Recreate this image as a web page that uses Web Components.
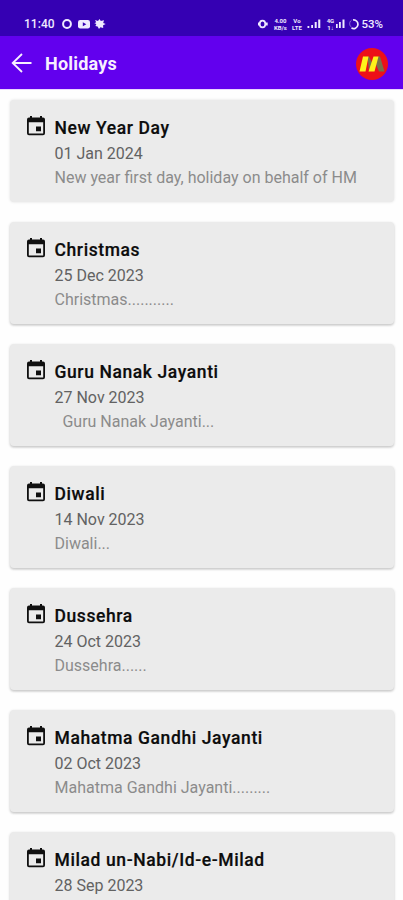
<!DOCTYPE html>
<html lang="en">
<head>
<meta charset="utf-8">
<title>Holidays</title>
<style>
html,body{margin:0;background:#fefefe}
body{width:403px;height:900px;overflow:hidden;font-family:Roboto,"Liberation Sans",sans-serif}
</style>
</head>
<body>
<holiday-screen></holiday-screen>
<script>
const define = (name, html) => customElements.define(name, class extends HTMLElement {
  constructor() {
    super();
    this.attachShadow({ mode: 'open' }).innerHTML = html;
  }
});

define('status-bar', `
<style>
:host{display:flex;box-sizing:border-box;height:36px;padding:12px 20px 0 24px;background:#3500b3;color:#efeaff;align-items:center;justify-content:space-between;font-size:12px;line-height:24px}
div{display:flex;align-items:center;height:24px}
svg{display:block;fill:currentColor}
.time{width:31px;letter-spacing:.05px;margin-right:7px;font-weight:500}
.stack{display:grid;font-size:6px;line-height:7px;font-weight:700;text-align:center}
.pct{font-size:11.5px;font-weight:500;letter-spacing:0}
</style>
<div><span class="time">11:40</span>
<svg width="44" height="12" viewBox="0 0 44 12"><ellipse cx="5" cy="6" rx="3.9" ry="4" fill="none" stroke="currentColor" stroke-width="2"/><rect x="16" y="2" width="12" height="8.5" rx="2.2"/><path d="M20.8 4.2v4l3.5-2z" fill="#3500b3"/><path d="M33 2l3 1 1.5-2 1.3 2L42 2.3l-.8 2.7 2.5 1.1-2.6 1.2.1 2.7-2.8-.8L37 11l-1.4-2.4-2.2-.5 1-2-2-.9 1.8-1z"/></svg></div>
<div>
<svg width="12" height="12" viewBox="0 0 12 12" style="margin-right:2px"><ellipse cx="4.5" cy="6" rx="2.8" ry="3.4" fill="none" stroke="currentColor" stroke-width="1.7"/><path d="M-.5 4.5h1.5v3H-.5zM8 4.5h1.7v3H8z"/></svg>
<span class="stack" style="width:16px"><span>4.00</span><span>KB/s</span></span>
<span class="stack" style="width:13px;margin-left:2px"><span>Vo</span><span>LTE</span></span>
<svg width="20" height="12" viewBox="0 0 20 12"><path d="M4.5 8h1.8v2H4.5zm3.7-1H10v3H8.200zM11.700 4h2v6h-2zm3.500-2.500h2.100V10h-2.100z"/></svg>
<span class="stack" style="width:12px;margin-left:1px"><span>4G</span><span>1↓</span></span>
<svg width="25" height="12" viewBox="0 0 25 12"><path d="M0 6h1.700v4H0zm3-2h1.800v6H3zm3.500-2.500h2V10h-2z"/><path d="M17 2a4.300 4.300 0 1 1-1.500 8" fill="none" stroke="currentColor" stroke-width="1.700"/><path d="M15.500 2.200c-2.400 1.500-2.400 5.500 0 7" fill="none" stroke="currentColor" opacity=".45"/></svg>
<span class="pct">53%</span></div>`);

define('app-bar', `
<style>
:host{display:flex;box-sizing:border-box;height:53px;padding:2px 14px 0 10px;align-items:center;background:#6200ee;color:#f7efff;box-shadow:0 1px 0 #e9d6ff}
h1{margin:0 auto 0 11px;font-size:18px;line-height:24px;font-weight:700;letter-spacing:.2px}
svg{display:block}
</style>
<svg width="24" height="24" viewBox="0 0 24 24" fill="none" stroke="currentColor" stroke-width="1.8"><path d="M21.5 11H3M12 2 2.7 11l9.3 9"/></svg>
<h1><slot></slot></h1>
<svg width="34" height="34" viewBox="355 48 34 34"><circle cx="372" cy="65" r="16" fill="#ed1018"/><path d="M367.500 57.500h1.500l4 8-3 7h-1zM378 57.500h2l4.500 15h-5.500l-3-7z" fill="#77724a"/><path d="M363 57.500h5.500l-3 15h-6zM373.500 57.500h5l-4 15h-6z" fill="#fff21a"/></svg>`);

define('event-icon', `
<style>:host{display:block;width:18px;height:20px}svg{display:block}</style>
<svg width="18" height="20" viewBox="0 0 18 20"><path fill="#101010" fill-rule="evenodd" d="M3 0h2v1.500h8V0h2v1.500h1a2 2 0 0 1 2 2v13.700a2 2 0 0 1-2 2H2a2 2 0 0 1-2-2V3.500a2 2 0 0 1 2-2h1zM1.800 6.200v11.200h14.400V6.200zm7.200 4.300h5v4.800H9z"/></svg>`);

define('holiday-card', `
<style>
:host{display:grid;box-sizing:border-box;height:102px;grid-template-columns:18px 1fr;column-gap:9.5px;padding:15.5px 16px 0 17px;border-radius:4px;background:#ebebeb;box-shadow:0 1px 3px rgba(0,0,0,.2),0 2px 2px rgba(0,0,0,.06)}
:host(:first-child){box-shadow:0 0 3px rgba(0,0,0,.13)}
div{min-width:0;white-space:pre}
h2,p{margin:0}
h2{font-size:17.5px;line-height:25px;font-weight:500;color:#0c0c0c;letter-spacing:.6px;-webkit-text-stroke:.2px #0c0c0c}
p{font-size:16px;line-height:24px}
.date{margin-top:1.5px;color:#626262}
.note{color:#8b8b8b}
</style>
<event-icon></event-icon>
<div><h2><slot name="title"></slot></h2><p class="date"><slot name="date"></slot></p><p class="note"><slot></slot></p></div>`);

define('holiday-screen', `
<style>
:host{display:flex;flex-direction:column;width:403px;height:900px;overflow:hidden}
status-bar,app-bar{flex:none}
main{display:grid;gap:20px;padding:11px 9.5px 0 10px}
</style>
<status-bar></status-bar>
<app-bar>Holidays</app-bar>
<main>
<holiday-card><span slot="title">New Year Day</span><span slot="date">01 Jan 2024</span>New year first day, holiday on behalf of HM</holiday-card>
<holiday-card><span slot="title">Christmas</span><span slot="date">25 Dec 2023</span>Christmas...........</holiday-card>
<holiday-card><span slot="title">Guru Nanak Jayanti</span><span slot="date">27 Nov 2023</span>  Guru Nanak Jayanti...</holiday-card>
<holiday-card><span slot="title">Diwali</span><span slot="date">14 Nov 2023</span>Diwali...</holiday-card>
<holiday-card><span slot="title">Dussehra</span><span slot="date">24 Oct 2023</span>Dussehra......</holiday-card>
<holiday-card><span slot="title">Mahatma Gandhi Jayanti</span><span slot="date">02 Oct 2023</span>Mahatma Gandhi Jayanti.........</holiday-card>
<holiday-card><span slot="title">Milad un-Nabi/Id-e-Milad</span><span slot="date">28 Sep 2023</span></holiday-card>
</main>`);
</script>
</body>
</html>
